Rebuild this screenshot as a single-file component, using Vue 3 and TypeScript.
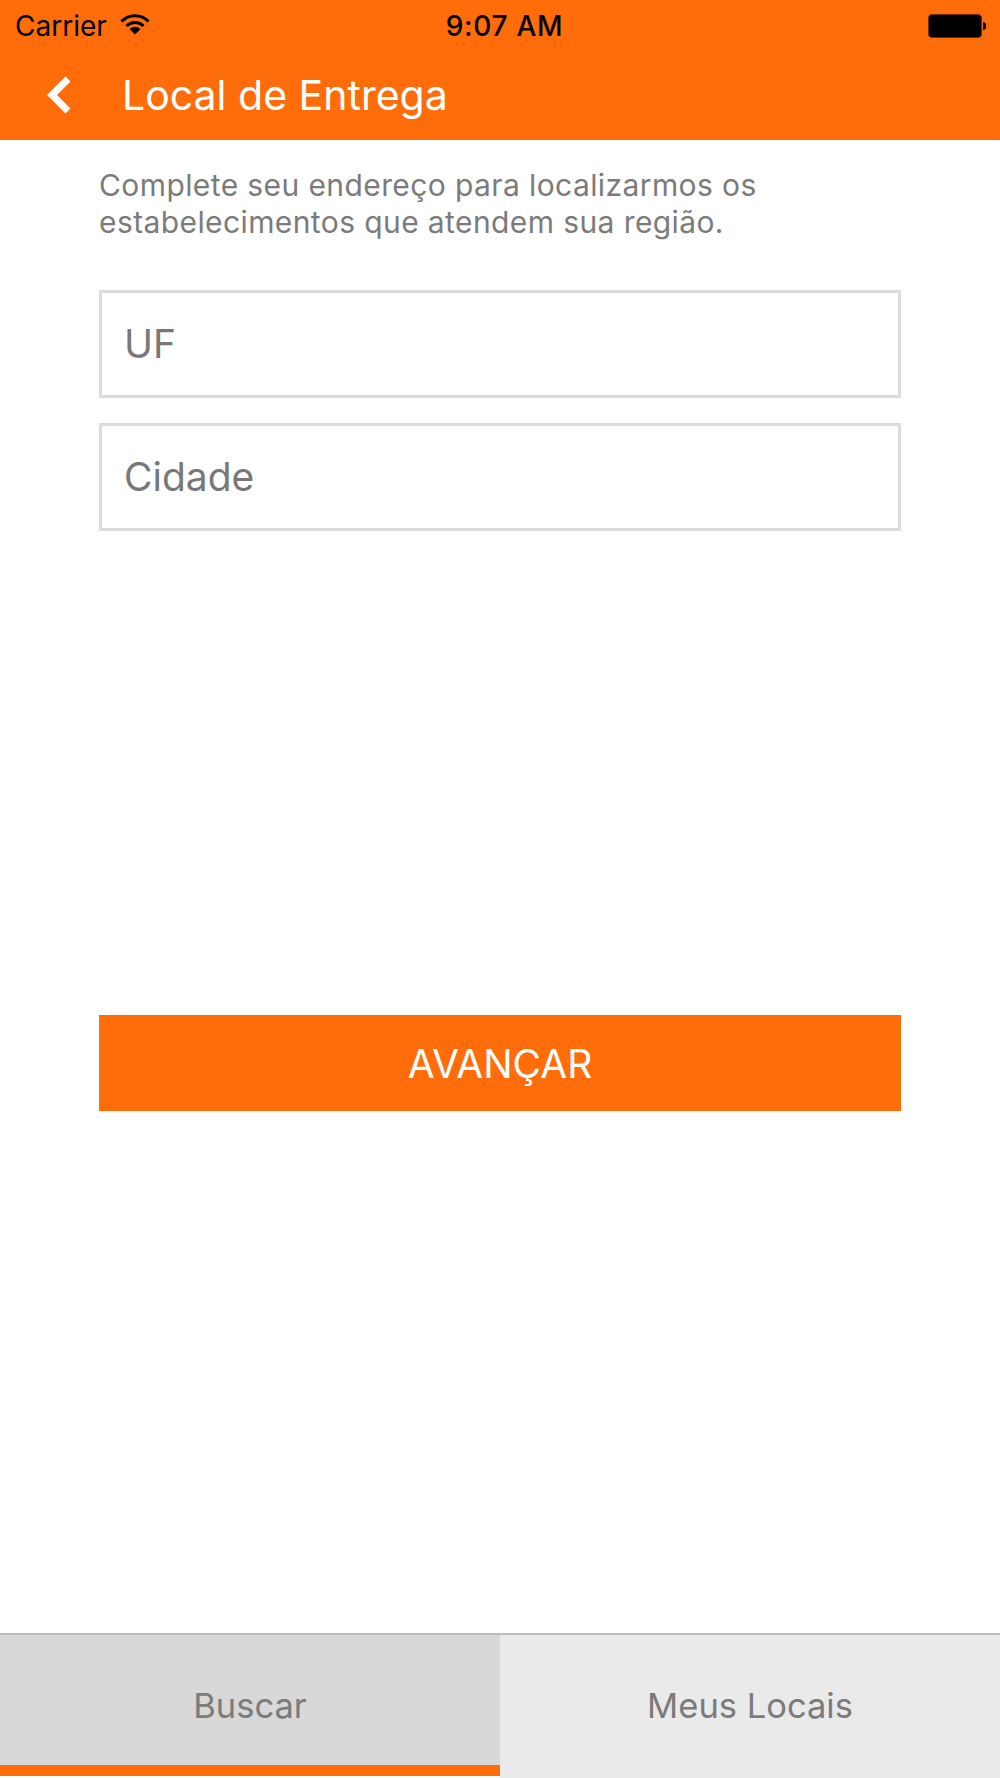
<script setup lang="ts">
const fields: string[] = ['UF', 'Cidade']
</script>

<template>
  <div class="screen">
    <header class="header">
      <div class="status">
        <div class="status-left">
          <span class="carrier">Carrier</span>
          <svg class="wifi" width="30" height="22" viewBox="0 0 30 22">
            <path d="M1.5 8.5 A19 19 0 0 1 28.5 8.5" fill="none" stroke="#000" stroke-width="3"/>
            <path d="M6.5 13 A12 12 0 0 1 23.5 13" fill="none" stroke="#000" stroke-width="3"/>
            <path d="M15 21.5 L9.5 16 A8 8 0 0 1 20.5 16 Z" fill="#000"/>
          </svg>
        </div>
        <span class="time">9:07 AM</span>
        <div class="battery"><span class="battery-body"></span><span class="battery-tip"></span></div>
      </div>
      <div class="nav">
        <svg class="back" width="28" height="40" viewBox="0 0 28 40">
          <path d="M24 4 L8 20 L24 36" fill="none" stroke="#fff" stroke-width="7"/>
        </svg>
        <h1 class="title">Local de Entrega</h1>
      </div>
    </header>

    <main class="content">
      <p class="intro">Complete seu endereço para localizarmos os<br>estabelecimentos que atendem sua região.</p>
      <div class="fields">
        <div v-for="f in fields" :key="f" class="field">{{ f }}</div>
      </div>
      <button class="next">AVANÇAR</button>
    </main>

    <nav class="tabs">
      <div class="tab active">Buscar</div>
      <div class="tab">Meus Locais</div>
    </nav>
  </div>
</template>

<style scoped>
.screen {
  width: 1000px;
  height: 1778px;
  display: flex;
  flex-direction: column;
  background: #fff;
  font-family: Inter, "Liberation Sans", sans-serif;
  overflow: hidden;
}
.header {
  height: 140px;
  background: #ff6d0a;
  flex: none;
}
.status {
  height: 52px;
  padding: 0 14px 0 15px;
  display: grid;
  grid-template-columns: 1fr auto 1fr;
  align-items: center;
  color: #000;
}
.status-left {
  display: flex;
  align-items: center;
  gap: 13px;
}
.carrier {
  font-size: 28px;
  font-weight: 400;
}
.wifi {
  margin-top: -4px;
}
.time {
  font-size: 28px;
  font-weight: 500;
  letter-spacing: 0.7px;
  padding-left: 8px;
}
.battery {
  justify-self: end;
  display: flex;
  align-items: center;
  gap: 1px;
}
.battery-body {
  width: 54px;
  height: 24px;
  background: #000;
  border: 1px solid #6b2c00;
  border-radius: 4px;
  box-sizing: border-box;
}
.battery-tip {
  width: 3px;
  height: 8px;
  background: #000;
  border-radius: 0 3px 3px 0;
}
.nav {
  height: 88px;
  padding-left: 44px;
  display: flex;
  align-items: center;
  gap: 50px;
  margin-top: -1px;
}
.back {
  flex: none;
}
.title {
  margin: 0;
  color: #fff;
  font-size: 41px;
  font-weight: 400;
}
.content {
  flex: 1;
  padding: 0 99px;
  display: flex;
  flex-direction: column;
}
.intro {
  margin: 27px 0 0;
  color: #7b7b7b;
  font-size: 30px;
  font-weight: 400;
  line-height: 37px;
  letter-spacing: 0.4px;
}
.fields {
  margin-top: 49px;
  display: flex;
  flex-direction: column;
  gap: 25px;
}
.field {
  height: 108px;
  box-sizing: border-box;
  border: 3px solid #dcdada;
  padding: 0 0 2px 22px;
  display: flex;
  align-items: center;
  color: #787878;
  font-size: 39px;
  font-weight: 400;
}
.next {
  margin-top: 484px;
  height: 96px;
  border: 0;
  background: #ff6d0a;
  color: #fff;
  font-family: inherit;
  font-size: 39px;
  font-weight: 400;
  padding: 0;
}
.tabs {
  flex: none;
  height: 145px;
  display: grid;
  grid-template-columns: 1fr 1fr;
  border-top: 2px solid #bcbcbc;
  box-sizing: border-box;
}
.tab {
  background: #eaeaea;
  display: flex;
  align-items: center;
  justify-content: center;
  color: #7b7b7b;
  font-size: 34.5px;
  font-weight: 400;
  box-sizing: border-box;
  border-bottom: 2px solid #eaeaea;
}
.tab.active {
  background: #d8d8d8;
  box-shadow: inset 0 -11px 0 #ff6d0a;
  border-bottom-color: #fff;
}
</style>
